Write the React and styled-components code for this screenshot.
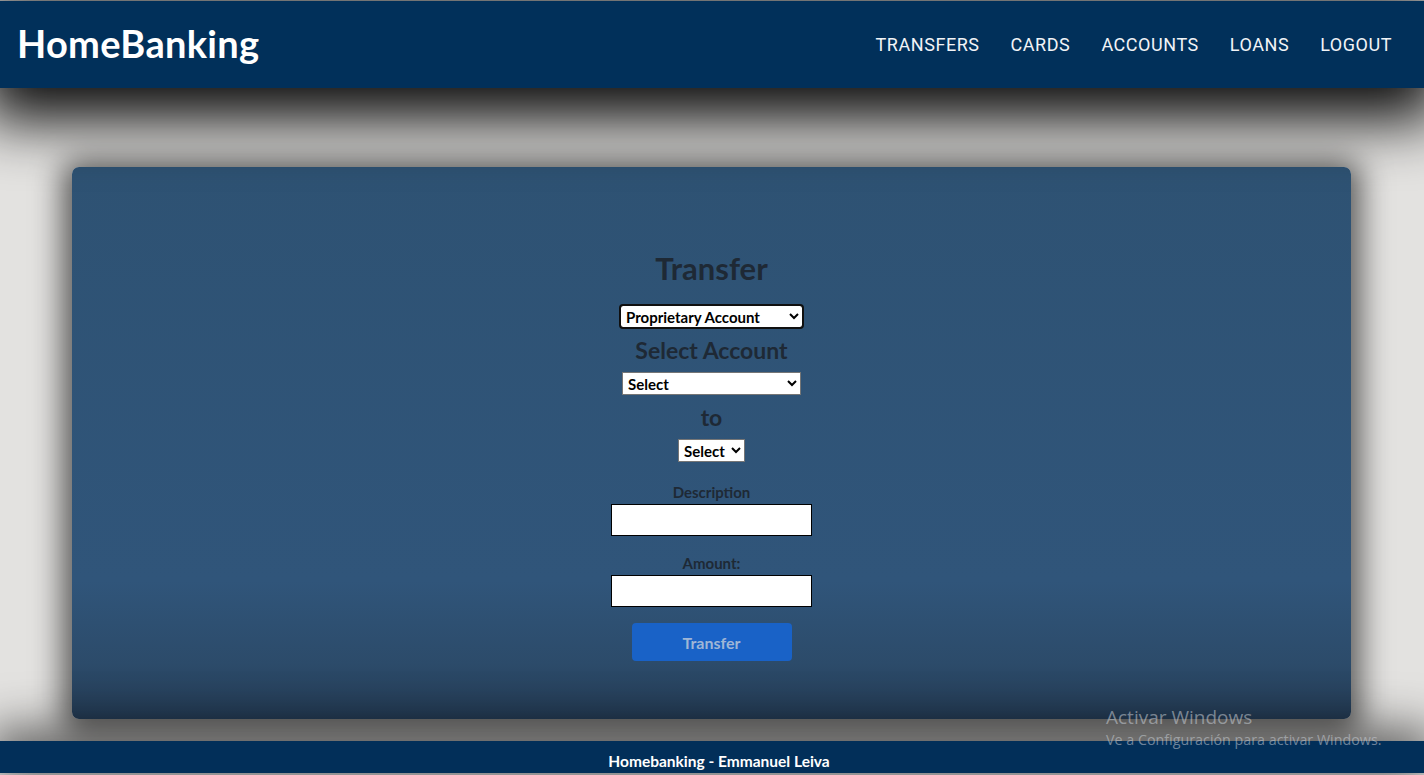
import React from 'react';
import styled, { createGlobalStyle } from 'styled-components';

const GlobalStyle = createGlobalStyle`
  html, body {
    margin: 0;
    padding: 0;
    background: #e3e2e0;
  }
  body {
    font-family: Lato, "Open Sans", sans-serif;
    overflow: hidden;
  }
  * {
    box-sizing: border-box;
  }
`;

const Page = styled.div`
  position: relative;
  display: flex;
  flex-direction: column;
  height: 775px;
  border-top: 1px solid #dcdcdc;
  border-bottom: 2px solid #f4f4f4;
`;

const Header = styled.header`
  position: relative;
  z-index: 2;
  display: flex;
  align-items: center;
  justify-content: space-between;
  height: 87px;
  padding: 0 32px 0 17px;
  background: #01305a;
  box-shadow: 0 16px 60px 16px rgba(0, 0, 0, 0.95);
`;

const Logo = styled.a`
  color: #fff;
  font-family: Lato, sans-serif;
  font-weight: 700;
  font-size: 38px;
  letter-spacing: 0.3px;
  text-decoration: none;
  margin-top: -4px;
`;

const NavList = styled.ul`
  display: flex;
  gap: 31px;
  margin: 0;
  padding: 0;
  list-style: none;
`;

const NavLink = styled.a`
  color: #f2f4f7;
  font-family: Roboto, "Liberation Sans", sans-serif;
  font-size: 18px;
  letter-spacing: 0.55px;
  text-decoration: none;
  text-transform: uppercase;
`;

const Main = styled.main`
  position: relative;
  z-index: 1;
  flex: 1;
  padding: 79px 73px 22px 72px;
  display: flex;
`;

const Card = styled.section`
  flex: 1;
  display: flex;
  flex-direction: column;
  align-items: center;
  padding-top: 83px;
  border-radius: 7px;
  background: linear-gradient(
    to bottom,
    #2e5273 0%,
    #30557a 75%,
    #2c4b6a 90%,
    #243b54 100%
  );
  box-shadow: 0 4px 30px 10px rgba(0, 0, 0, 0.6);
`;

const Title = styled.h2`
  margin: 0 0 19px;
  color: #1e2935;
  font-size: 31px;
  font-weight: 700;
  line-height: 36px;
`;

const SubTitle = styled.h3`
  margin: 8px 0 8px;
  color: #1e2935;
  font-size: 23px;
  font-weight: 700;
  line-height: 28px;
`;

const Select = styled.select`
  height: 23px;
  width: ${p => p.$w}px;
  padding: 0 2px 0 1px;
  font-family: Lato, sans-serif;
  font-weight: 700;
  font-size: 15px;
  color: #000;
  background: #fff;
  border: 1px solid #767676;
  border-radius: ${p => (p.$focus ? '3px' : '0')};
  outline: ${p => (p.$focus ? '2px solid #101010' : 'none')};
  outline-offset: -1px;
`;

const Field = styled.div`
  display: flex;
  flex-direction: column;
  align-items: center;
  margin-top: ${p => p.$top}px;
`;

const Label = styled.label`
  color: #1e2935;
  font-size: 15px;
  font-weight: 700;
  line-height: 18px;
  margin-bottom: 3px;
`;

const Input = styled.input`
  width: 201px;
  height: 32px;
  border: 1px solid #000;
  background: #fff;
`;

const Button = styled.button`
  margin-top: 16px;
  width: 160px;
  height: 38px;
  border: none;
  border-radius: 4px;
  background: #1962c7;
  color: #9fb6d6;
  font-family: Lato, sans-serif;
  font-weight: 700;
  font-size: 16px;
`;

const Footer = styled.footer`
  position: relative;
  z-index: 2;
  height: 32px;
  display: flex;
  align-items: flex-end;
  justify-content: center;
  padding: 0 0 3px 14px;
  background: #022f59;
  box-shadow: 0 0 50px 10px rgba(0, 0, 0, 0.65);
  color: #fff;
  font-weight: 700;
  font-size: 15.5px;
`;

const Watermark = styled.div`
  position: absolute;
  z-index: 5;
  left: 1106px;
  top: 704px;
  color: rgba(200, 205, 212, 0.55);
  font-family: "Open Sans", "Noto Sans", sans-serif;
  pointer-events: none;
  div:first-child {
    font-size: 19px;
    line-height: 25px;
  }
  div:last-child {
    font-size: 14.3px;
    line-height: 20px;
  }
`;

const navItems = ['Transfers', 'Cards', 'Accounts', 'Loans', 'Logout'];

const App = () => (
  <Page>
    <GlobalStyle />
    <Header>
      <Logo href="#">HomeBanking</Logo>
      <nav>
        <NavList>
          {navItems.map(item => (
            <li key={item}>
              <NavLink href="#">{item}</NavLink>
            </li>
          ))}
        </NavList>
      </nav>
    </Header>
    <Main>
      <Card>
        <Title>Transfer</Title>
        <Select $w={183} $focus defaultValue="own">
          <option value="own">Proprietary Account</option>
          <option value="other">Third Party Account</option>
        </Select>
        <SubTitle>Select Account</SubTitle>
        <Select $w={179}>
          <option>Select</option>
        </Select>
        <SubTitle>to</SubTitle>
        <Select $w={67}>
          <option>Select</option>
        </Select>
        <Field $top={21}>
          <Label>Description</Label>
          <Input type="text" />
        </Field>
        <Field $top={18}>
          <Label>Amount:</Label>
          <Input type="number" />
        </Field>
        <Button>Transfer</Button>
      </Card>
    </Main>
    <Footer>Homebanking - Emmanuel Leiva</Footer>
    <Watermark>
      <div>Activar Windows</div>
      <div>Ve a Configuración para activar Windows.</div>
    </Watermark>
  </Page>
);

export default App;
